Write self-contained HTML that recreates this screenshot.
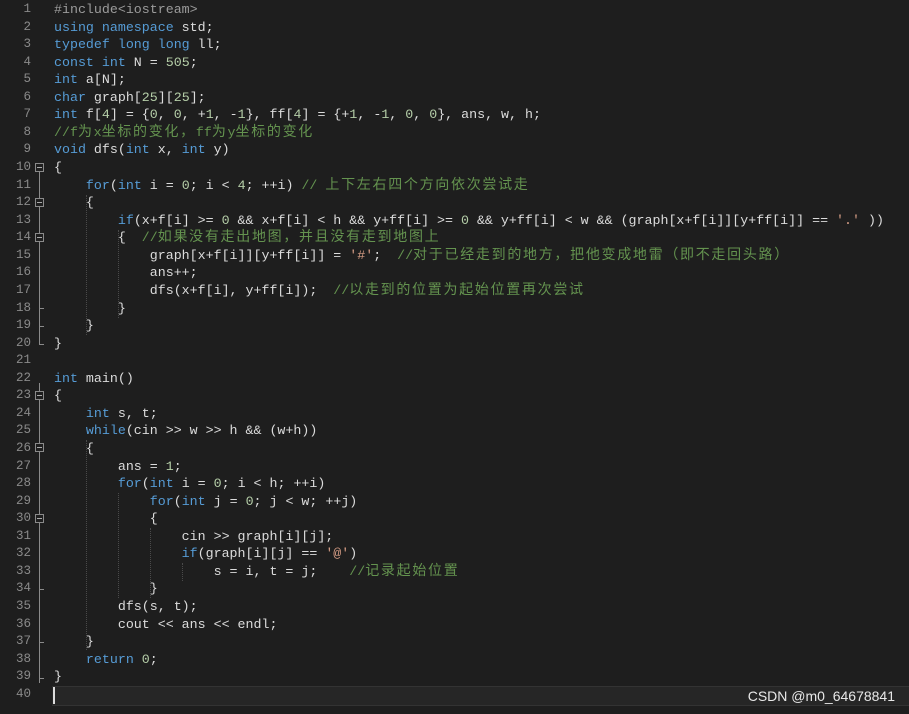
<!DOCTYPE html>
<html><head><meta charset="utf-8"><style>
body{margin:0;width:909px;height:714px;background:#1e1e1e;overflow:hidden;position:relative;font-family:"Liberation Mono","Noto Sans CJK SC",monospace;font-size:13.3px;color:#dcdcdc}
.l{position:absolute;left:54px;height:17.56px;line-height:17.56px;white-space:pre}
.n{position:absolute;left:0;width:31px;text-align:right;height:17.56px;line-height:17.56px;color:#8a8a8a;font-size:12.5px}
.k{color:#569cd6}.c{color:#64934f}.m{color:#b5cea8}.p{color:#9b9b9b}.s{color:#d69d85}
.z{font-size:14px;letter-spacing:1.7px}
.g{position:absolute;width:1px;border-left:1px dotted #4a4a4a}
.fb{position:absolute;left:35px;width:9px;height:9px;border:1px solid #8a8a8a;box-sizing:border-box;background:#1e1e1e}
.fb:after{content:"";position:absolute;left:1px;top:3px;width:5px;height:1px;background:#aaa}
.fl{position:absolute;left:39px;width:1px;background:#8a8a8a}
.ft{position:absolute;left:39px;width:5px;height:1px;background:#8a8a8a}
</style></head><body>
<div style="position:absolute;left:52px;top:686px;width:857px;height:18px;background:#262626;border-top:1px solid #333;border-bottom:1px solid #333"></div>
<div style="position:absolute;left:53px;top:687px;width:2px;height:17px;background:#dcdcdc"></div>
<div class="fl" style="top:172px;height:172px"></div>
<div class="fl" style="top:383px;height:300px"></div>
<div class="fb" style="top:163px"></div>
<div class="fb" style="top:198px"></div>
<div class="fb" style="top:233px"></div>
<div class="fb" style="top:391px"></div>
<div class="fb" style="top:443px"></div>
<div class="fb" style="top:514px"></div>
<div class="ft" style="top:308px"></div><div class="ft" style="top:326px"></div><div class="ft" style="top:344px"></div>
<div class="ft" style="top:589px"></div><div class="ft" style="top:642px"></div><div class="ft" style="top:678px"></div>
<div class="g" style="left:86px;top:195px;height:140px"></div>
<div class="g" style="left:118px;top:230px;height:88px"></div>
<div class="g" style="left:86px;top:440px;height:210px"></div>
<div class="g" style="left:118px;top:493px;height:105px"></div>
<div class="g" style="left:150px;top:528px;height:70px"></div>
<div class="g" style="left:182px;top:563px;height:18px"></div>
<div id="c"></div>
<script>
const L=[
'<span class="p">#include&lt;iostream&gt;</span>',
'<span class="k">using namespace</span> std;',
'<span class="k">typedef long long</span> ll;',
'<span class="k">const int</span> N = <span class="m">505</span>;',
'<span class="k">int</span> a[N];',
'<span class="k">char</span> graph[<span class="m">25</span>][<span class="m">25</span>];',
'<span class="k">int</span> f[<span class="m">4</span>] = {<span class="m">0</span>, <span class="m">0</span>, +<span class="m">1</span>, -<span class="m">1</span>}, ff[<span class="m">4</span>] = {+<span class="m">1</span>, -<span class="m">1</span>, <span class="m">0</span>, <span class="m">0</span>}, ans, w, h;',
'<span class="c">//f<span class="z">为</span>x<span class="z">坐标的变化，</span>ff<span class="z">为</span>y<span class="z">坐标的变化</span></span>',
'<span class="k">void</span> dfs(<span class="k">int</span> x, <span class="k">int</span> y)',
'{',
'    <span class="k">for</span>(<span class="k">int</span> i = <span class="m">0</span>; i &lt; <span class="m">4</span>; ++i) <span class="c">// <span class="z">上下左右四个方向依次尝试走</span></span>',
'    {',
'        <span class="k">if</span>(x+f[i] &gt;= <span class="m">0</span> &amp;&amp; x+f[i] &lt; h &amp;&amp; y+ff[i] &gt;= <span class="m">0</span> &amp;&amp; y+ff[i] &lt; w &amp;&amp; (graph[x+f[i]][y+ff[i]] == <span class="s">\'.\'</span> ))',
'        {  <span class="c">//<span class="z">如果没有走出地图，并且没有走到地图上</span></span>',
'            graph[x+f[i]][y+ff[i]] = <span class="s">\'#\'</span>;  <span class="c">//<span class="z">对于已经走到的地方，把他变成地雷（即不走回头路）</span></span>',
'            ans++;',
'            dfs(x+f[i], y+ff[i]);  <span class="c">//<span class="z">以走到的位置为起始位置再次尝试</span></span>',
'        }',
'    }',
'}',
'',
'<span class="k">int</span> main()',
'{',
'    <span class="k">int</span> s, t;',
'    <span class="k">while</span>(cin &gt;&gt; w &gt;&gt; h &amp;&amp; (w+h))',
'    {',
'        ans = <span class="m">1</span>;',
'        <span class="k">for</span>(<span class="k">int</span> i = <span class="m">0</span>; i &lt; h; ++i)',
'            <span class="k">for</span>(<span class="k">int</span> j = <span class="m">0</span>; j &lt; w; ++j)',
'            {',
'                cin &gt;&gt; graph[i][j];',
'                <span class="k">if</span>(graph[i][j] == <span class="s">\'@\'</span>)',
'                    s = i, t = j;    <span class="c">//<span class="z">记录起始位置</span></span>',
'            }',
'        dfs(s, t);',
'        cout &lt;&lt; ans &lt;&lt; endl;',
'    }',
'    <span class="k">return</span> <span class="m">0</span>;',
'}',
''];
let h='';
L.forEach((t,i)=>{const y=(1+i*17.56).toFixed(2);h+=`<div class="n" style="top:${y}px">${i+1}</div><div class="l" style="top:${y}px">${t}</div>`;});
document.getElementById('c').innerHTML=h;
</script>
<div style="position:absolute;right:14px;top:688px;font-family:'Liberation Sans',sans-serif;font-size:14px;color:#e8e8e8">CSDN @m0_64678841</div>
</body></html>
